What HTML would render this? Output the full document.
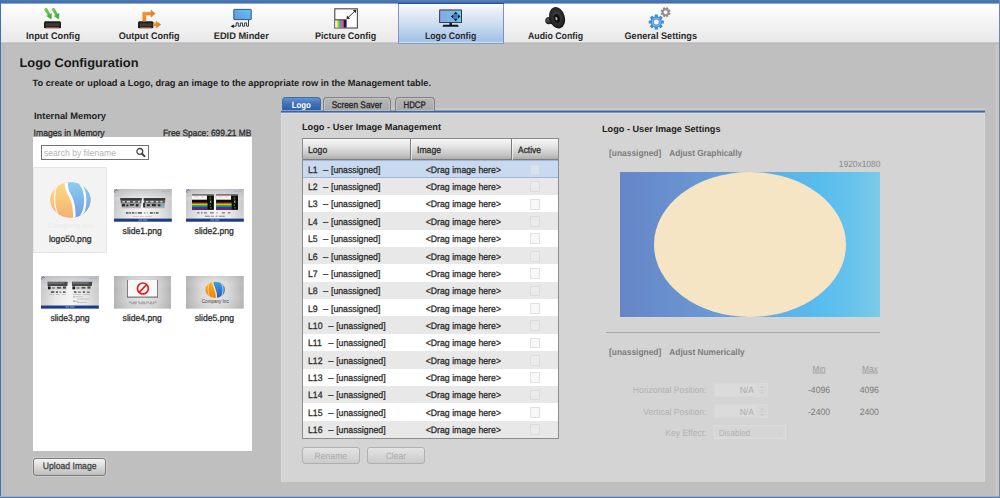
<!DOCTYPE html>
<html><head><meta charset="utf-8"><title>Logo Configuration</title>
<style>
*{box-sizing:border-box;margin:0;padding:0}
html,body{width:1000px;height:498px;overflow:hidden}
body{font-family:"Liberation Sans",sans-serif;font-size:9px;color:#333;background:#bfbfbf;position:relative}
.a{position:absolute}
.t{position:absolute;white-space:nowrap;line-height:20px;height:20px}
#nav{position:absolute;left:0;top:0;width:1000px;height:43px;background:linear-gradient(#fff 0,#fff 14%,#f5f5f5 45%,#e9e9e9 100%);border-bottom:1px solid #cbcbcb;box-shadow:0 1px 0 #b9b9b9}
#active{position:absolute;left:398px;top:3.2px;width:106px;height:40.8px;background:linear-gradient(#fcfdfe 0,#eaf1f9 15%,#c9dbf0 55%,#a0c1e9 96%,#c6def6 97%,#c6def6 100%);border-left:1.1px solid #8a8ecb;border-right:1.1px solid #7f8cca;border-top:1.2px solid #2c4f98;border-bottom:1px solid #8f9cae}
#acttop{position:absolute;left:398px;top:0;width:106px;height:4.4px;background:linear-gradient(#5d83c2 0,#4a76b4 45%,#3f6aaa 68%,#2c4f98 70%,#2c4f98 100%);z-index:10}
#ftop{position:absolute;left:0;top:0;width:1000px;height:4px;background:linear-gradient(#4c7ab4 0,#4872b0 50%,#3f69a9 75%,#3f69a9 75%,#7f9bc8 76%,#a9bcdc 100%);z-index:9}
#fleft{position:absolute;left:0;top:0;width:1.1px;height:498px;background:#3f6fb8;z-index:9}
#fbot{position:absolute;left:0;top:496px;width:1000px;height:2px;background:linear-gradient(#a0aec4 0,#a0aec4 50%,#4f7cba 50%,#4f7cba 100%);z-index:9}
#fright{position:absolute;left:999px;top:0;width:1px;height:498px;background:#6c86bc;z-index:9}
#rstrip{position:absolute;left:992px;top:44px;width:7px;height:453px;background:linear-gradient(90deg,#c5b9c4 0,#c5b9c4 28%,#bfc5bb 29%,#bfc5bb 57%,#c6c7bf 58%,#c6c7bf 100%);z-index:8}
#lstrip{position:absolute;left:1px;top:44px;width:7px;height:453px;background:linear-gradient(90deg,#c2c1b5 0,#c2c1b5 21%,#b8bcc5 22%,#b8bcc5 50%,#c5bac1 51%,#c5bac1 78%,#bac4bb 79%,#bac4bb 100%);z-index:8}
</style></head><body>
<div id="nav"></div>
<div id="active"></div>
<!-- Input Config icon -->
<svg class="a" style="left:40px;top:5px" width="26" height="26" viewBox="40 5 26 26">
 <defs><linearGradient id="gr" x1="0" y1="0" x2="1" y2="1"><stop offset="0" stop-color="#7edc5a"/><stop offset="1" stop-color="#2f9e2a"/></linearGradient></defs>
 <g fill="url(#gr)" stroke="#3aa535" stroke-width=".4">
  <path d="M44.3 9.2 L46.6 8 L50 14.2 L51.6 13.4 L51.2 19 L46.6 16 L48.1 15.2 Z"/>
  <path d="M51.8 9.2 L54.1 8 L57.5 14.2 L59.1 13.4 L58.7 19 L54.1 16 L55.6 15.2 Z"/>
 </g>
 <path d="M45 21.2 H60 L61 22.2 V27.2 L60 28.2 H45 L44 27.2 V22.2 Z" fill="#1c1c1c"/>
 <rect x="45.5" y="23.2" width="14" height="3" fill="#3a3a3a"/>
 <rect x="46" y="27.1" width="13" height="1" fill="#b4523a"/>
</svg>
<!-- Output Config icon -->
<svg class="a" style="left:134px;top:5px" width="30" height="26" viewBox="134 5 30 26">
 <path d="M139 21.3 H152.3 L153.3 22.3 V27.2 L152.3 28.2 H139 L138 27.2 V22.3 Z" fill="#1c1c1c"/>
 <rect x="139.6" y="23.2" width="12.2" height="3" fill="#3a3a3a"/>
 <rect x="140" y="27.1" width="11.4" height="1" fill="#b4523a"/>
 <defs><linearGradient id="orr" x1="0" y1="0" x2="1" y2="1"><stop offset="0" stop-color="#f9a23c"/><stop offset="1" stop-color="#e46f0c"/></linearGradient></defs><g fill="url(#orr)" stroke="#c9680e" stroke-width=".4">
  <path d="M142.8 21.4 V12.2 H150.9 V10 L155.2 13.6 L150.9 17.2 V15 H145.8 V21.4 Z"/>
  <path d="M153 23.4 H156.3 V21.3 L160.8 24.6 L156.3 27.9 V25.8 H153 Z"/>
 </g>
</svg>
<!-- EDID Minder icon -->
<svg class="a" style="left:226px;top:5px" width="30" height="26" viewBox="226 5 30 26">
 <defs><linearGradient id="ed" x1="1" y1="0" x2="0" y2="1"><stop offset="0" stop-color="#64c6f3"/><stop offset=".5" stop-color="#60aeeb"/><stop offset="1" stop-color="#6a8fe0"/></linearGradient></defs>
 <rect x="233.8" y="9.4" width="17.4" height="10.2" rx=".4" fill="url(#ed)" stroke="#2f5688" stroke-width="1"/>
 <path d="M233.6 26.2 H236.2 V22.9 H238.3 V26.2 H240.4 V22.9 H242.5 V26.2 H244.6 V22.9 H246.6 V26.2 H248.5 V20" fill="none" stroke="#2a2a2a" stroke-width=".9"/>
 <path d="M230.6 26.3 L233.8 24.5 V28.1 Z" fill="#111"/>
</svg>
<!-- Picture Config icon -->
<svg class="a" style="left:330px;top:5px" width="32" height="26" viewBox="330 5 32 26">
 <rect x="334.8" y="8.8" width="22.6" height="19.2" fill="#fcfcfc" stroke="#4a4a4a" stroke-width="1.1"/>
 <rect x="335.4" y="20" width="1.3" height="7.6" fill="#f4f4f4"/>
 <rect x="336.6" y="20" width="1.9" height="7.6" fill="#f0e020"/>
 <rect x="338.4" y="20" width="1.5" height="7.6" fill="#30c848"/>
 <rect x="339.8" y="20" width="1.5" height="7.6" fill="#28a8e0"/>
 <rect x="341.2" y="20" width="1.4" height="7.6" fill="#e030a0"/>
 <rect x="342.5" y="20" width="1.6" height="7.6" fill="#e82848"/>
 <rect x="344" y="20" width="2.6" height="7.6" fill="#181848"/>
 <path d="M335 19.8 H346.6" fill="none" stroke="#333" stroke-width="1"/>
 <path d="M347.6 18 L355.2 10.8" stroke="#333" stroke-width="1"/>
 <path d="M356.2 9.8 L355.9 13.3 L352.7 10.1 Z M346.6 19 L346.9 15.5 L350.1 18.7 Z" fill="#2a2a2a"/>
</svg>
<!-- Logo Config icon -->
<svg class="a" style="left:434px;top:5px" width="32" height="26" viewBox="434 5 32 26">
 <defs><linearGradient id="lc" x1="0" y1="0" x2="1" y2="0"><stop offset="0" stop-color="#86a8e6"/><stop offset=".5" stop-color="#7cb4ea"/><stop offset="1" stop-color="#6cc8f2"/></linearGradient></defs>
 <rect x="439.2" y="9.5" width="22.7" height="13.6" rx=".6" fill="#2a2226"/>
 <rect x="440.1" y="10.4" width="20.9" height="11.8" fill="url(#lc)"/>
 <circle cx="455.7" cy="16.5" r="2.3" fill="#2f7fd8"/>
 <path d="M455.7 11.8 L457.9 14.2 H453.5 Z M455.7 21.2 L457.9 18.8 H453.5 Z M451 16.5 L453.4 14.3 V18.7 Z M460.4 16.5 L458 14.3 V18.7 Z" fill="#141820"/>
 <rect x="449.4" y="23" width="2.6" height="2" fill="#1c1c1e"/>
 <path d="M443.4 24.7 H457.8 L458.8 26.7 H442.4 Z" fill="#141416"/>
</svg>
<!-- Audio Config icon -->
<svg class="a" style="left:540px;top:4px" width="30" height="26" viewBox="540 4 30 26">
 <defs><radialGradient id="sp" cx=".5" cy=".45" r=".6"><stop offset="0" stop-color="#4a4a4a"/><stop offset=".6" stop-color="#2a2a2a"/><stop offset="1" stop-color="#0e0e0e"/></radialGradient>
 <radialGradient id="sk" cx=".4" cy=".4" r=".7"><stop offset="0" stop-color="#5a5a5a"/><stop offset="1" stop-color="#0c0c0c"/></radialGradient></defs>
 <circle cx="548.8" cy="20.6" r="3.6" fill="url(#sk)"/><path d="M549 17.2 L554 15 L555 25 L550.4 23.8 Z" fill="#1a1a1a"/>
 <g transform="translate(557.1 17.8) rotate(-16)">
  <ellipse rx="7.7" ry="11" fill="url(#sp)"/>
  <ellipse cx="-0.4" cy="0.6" rx="3" ry="4.4" fill="#101010"/>
  <ellipse cx="-0.9" cy="0.6" rx="1" ry="1.7" fill="#b4b4b4"/>
 </g>
</svg>
<!-- General Settings icon -->
<svg class="a" style="left:646px;top:4px" width="30" height="28" viewBox="646 4 30 28">
 <g transform="translate(656.3 22)">
  <g fill="#3f8ad8">
   <rect x="-1.6" y="-7.6" width="3.2" height="15.2" rx=".6"/>
   <rect x="-1.6" y="-7.6" width="3.2" height="15.2" rx=".6" transform="rotate(45)"/>
   <rect x="-1.6" y="-7.6" width="3.2" height="15.2" rx=".6" transform="rotate(90)"/>
   <rect x="-1.6" y="-7.6" width="3.2" height="15.2" rx=".6" transform="rotate(135)"/>
  </g>
  <circle r="5.7" fill="#3f8ad8"/>
  <circle r="4.5" fill="#84bef0"/>
  <circle r="3.4" fill="#4a94de"/>
  <circle r="2.5" fill="#f6f6f2"/>
 </g>
 <g transform="translate(665.6 12.2) rotate(22)">
  <g fill="#8a8a8a">
   <rect x="-1.1" y="-5" width="2.2" height="10" rx=".4"/>
   <rect x="-1.1" y="-5" width="2.2" height="10" rx=".4" transform="rotate(45)"/>
   <rect x="-1.1" y="-5" width="2.2" height="10" rx=".4" transform="rotate(90)"/>
   <rect x="-1.1" y="-5" width="2.2" height="10" rx=".4" transform="rotate(135)"/>
  </g>
  <circle r="3.7" fill="#909090"/>
  <circle r="1.9" fill="#fafafa"/>
 </g>
</svg>

<div class="a" style="left:33px;top:137px;width:219px;height:314px;background:#fff;"></div>
<div class="a" style="left:40.5px;top:145px;width:108.5px;height:14.5px;background:#fff;border:1px solid #727272;"></div>
<svg class="a" style="left:134px;top:146px" width="13" height="13" viewBox="0 0 13 13"><circle cx="5.8" cy="5.4" r="2.9" fill="none" stroke="#444" stroke-width="1.3"/><path d="M8 7.7 L10.6 10.2" stroke="#444" stroke-width="1.9" stroke-linecap="round"/></svg>
<div class="a" style="left:33px;top:167px;width:73.5px;height:86px;background:#f3f3f3;border:1px solid #e6e6e6;"></div>
<!-- logo50 globe -->
<svg class="a" style="left:40px;top:176px" width="62" height="58" viewBox="40 176 62 58">
 <defs>
  <clipPath id="g1"><ellipse cx="70.4" cy="200" rx="20.2" ry="17.8"/></clipPath>
  <linearGradient id="og" x1="0" y1="0" x2="0" y2="1"><stop offset="0" stop-color="#f9dc84"/><stop offset=".55" stop-color="#f7c67a"/><stop offset="1" stop-color="#f4ac72"/></linearGradient>
  <linearGradient id="bl" x1="0" y1="0" x2="0" y2="1"><stop offset="0" stop-color="#8ad0f5"/><stop offset=".5" stop-color="#7cb6ec"/><stop offset="1" stop-color="#7098e0"/></linearGradient>
 </defs>
 <g clip-path="url(#g1)">
  <rect x="48" y="180" width="45" height="40" fill="url(#og)"/>
  <path d="M66.5 180 C65.5 192 75.5 198 74.4 220 L95 220 L95 180 Z" fill="url(#bl)"/>
  <path d="M65.2 181 C63.8 186 65.6 190.5 68.6 196 C71.8 202 73.4 208 73 219 L75.4 219 C76.2 208 74 200 71 194.6 C68.4 190 67.4 186 68.4 181 Z" fill="#fbfbfb"/>
  <path d="M56.8 184.5 C53.6 193 53.8 206 57.8 214.5" stroke="#f9f5ec" stroke-width="1.3" fill="none"/>
  <path d="M80 183.4 C86.8 191 87 208 80.6 216.8" stroke="#fafafa" stroke-width="2.3" fill="none"/>
 </g>
 <text x="70.4" y="227.6" font-size="7.2" font-weight="bold" text-anchor="middle" fill="#ededed" font-family="Liberation Sans, sans-serif">Company Inc</text>
</svg>
<!-- slide1 -->
<svg class="a" style="left:114px;top:189.4px" width="57.8" height="32.7" viewBox="0 0 58 33" preserveAspectRatio="none">
 <defs>
  <linearGradient id="sbg" x1="0" y1="0" x2="1" y2="0"><stop offset="0" stop-color="#c6c6c8"/><stop offset=".25" stop-color="#e6e6e7"/><stop offset=".5" stop-color="#f4f4f5"/><stop offset=".75" stop-color="#e6e6e7"/><stop offset="1" stop-color="#c6c6c8"/></linearGradient>
  <linearGradient id="sbv" x1="0" y1="0" x2="0" y2="1"><stop offset="0" stop-color="#b4b4b8" stop-opacity=".75"/><stop offset=".22" stop-color="#c8c8cc" stop-opacity=".45"/><stop offset=".38" stop-color="#fff" stop-opacity="0"/><stop offset="1" stop-color="#fff" stop-opacity=".2"/></linearGradient>
  <linearGradient id="dev" x1="0" y1="0" x2="0" y2="1"><stop offset="0" stop-color="#4a4c4e"/><stop offset=".45" stop-color="#5e6062"/><stop offset=".55" stop-color="#9a9c9e"/><stop offset="1" stop-color="#b4b6b8"/></linearGradient>
  <filter id="soft" x="-5%" y="-5%" width="110%" height="110%"><feGaussianBlur stdDeviation=".35"/></filter>
 </defs>
 <g id="slidebg">
  <rect width="58" height="33" fill="url(#sbg)"/>
  <rect width="58" height="33" fill="url(#sbv)"/>
  <path d="M1.3 3.8 A1.5 1.5 0 1 1 3.6 2.2" stroke="#4a5f88" stroke-width=".8" fill="none"/>
  <rect x="48.6" y="1.8" width="2.4" height="1" fill="#9ab0d4"/><rect x="52" y="1.8" width="1.6" height="1" fill="#9ab0d4"/><rect x="54.4" y="1.8" width="1.8" height="1" fill="#9ab0d4"/>
  <rect x="0" y="29.9" width="58" height="3.1" fill="#1d3b8b"/>
  <rect x="24.6" y="30.9" width="3.6" height=".9" fill="#9cb0e0"/><rect x="29" y="30.9" width="4.6" height=".9" fill="#9cb0e0"/>
 </g>
 <g filter="url(#soft)">
  <path d="M6.2 9 H28 L27 19.4 H7.6 Z" fill="url(#dev)"/>
  <path d="M29.6 9 H51.6 L50.6 19.4 H30.4 Z" fill="url(#dev)"/>
  <rect x="6.6" y="9.4" width="21" height="1.6" fill="#333537"/><rect x="30" y="9.4" width="21.2" height="1.6" fill="#333537"/>
  <g fill="#d8dadc"><rect x="8.5" y="12.2" width="2.4" height="1.4"/><rect x="13" y="12" width="3" height="1.6"/><rect x="19" y="12.2" width="2.4" height="1.4"/><rect x="24" y="12" width="2" height="1.6"/><rect x="32" y="12.2" width="2.4" height="1.4"/><rect x="36.6" y="12" width="3" height="1.6"/><rect x="42" y="12.2" width="2.4" height="1.4"/><rect x="46.5" y="12" width="2" height="1.6"/></g>
  <g fill="#2a2c2e"><rect x="8" y="15" width="3" height="2.6"/><rect x="12.4" y="15.6" width="2" height="2"/><rect x="16" y="15.2" width="4" height="1.6"/><rect x="22" y="15.2" width="2.6" height="2.4"/><rect x="29.2" y="14" width="1.8" height="4.6"/><rect x="33" y="15.4" width="3" height="2"/><rect x="38" y="15" width="4" height="2.4"/><rect x="44" y="15.4" width="2.6" height="2"/></g>
  <rect x="47.6" y="15" width="3" height="3.4" fill="#7ea8c8"/>
 </g>
 <g fill="#5e5e60"><rect x="12" y="23.3" width="2.6" height="1.7"/><rect x="15.4" y="23.3" width="1.6" height="1.7"/><rect x="18" y="23.3" width="2.4" height="1.7"/><rect x="21.6" y="23.3" width="1" height="1.7"/><rect x="24" y="23.3" width="4" height="1.7"/><rect x="30" y="23.8" width="1.6" height=".8"/><rect x="33" y="23.8" width="1" height=".8"/><rect x="36" y="23.3" width="3" height="1.7"/><rect x="40" y="23.3" width="1" height="1.7"/><rect x="42" y="23.3" width="2.6" height="1.7"/></g>
 <g fill="#c0b8a8"><rect x="19" y="27.2" width="6" height=".7"/><rect x="26" y="27.2" width="4" height=".7"/><rect x="31" y="27.2" width="7" height=".7"/></g>
</svg>
<!-- slide2 -->
<svg class="a" style="left:186px;top:189.4px" width="57.8" height="32.7" viewBox="0 0 58 33" preserveAspectRatio="none">
 <use href="#slidebg"/>
 <g id="cbpanel" filter="url(#soft)" transform="translate(0 .7)">
  <rect x="6" y="4.8" width="22" height="15.6" fill="#0c0c0c"/>
  <rect x="6" y="4.8" width="22" height="1.1" fill="#8a8a8c"/>
  <rect x="6" y="5.9" width="15" height="4.2" fill="#faf8f8"/>
  <rect x="8" y="7" width="5" height=".6" fill="#e8a0a0"/><rect x="14.5" y="7" width="4" height=".6" fill="#e8a0a0"/>
  <rect x="6" y="13.1" width="15.6" height="1.2" fill="#e85820"/>
  <rect x="6" y="14.3" width="15.6" height="1.2" fill="#c8d028"/>
  <rect x="6" y="15.5" width="15.6" height="1.1" fill="#30b048"/>
  <rect x="6" y="16.6" width="15.6" height="1.1" fill="#2898a8"/>
  <rect x="6" y="17.7" width="15.6" height="1.2" fill="#2848c8"/>
  <rect x="6" y="18.9" width="15.6" height="1.2" fill="#a02890"/>
  <rect x="23.6" y="7" width="1.6" height="3" fill="#3a5a3a"/><rect x="24" y="11" width="1.4" height="2.4" fill="#68b868"/><rect x="23.8" y="14.6" width="1.2" height="2" fill="#3a6a3a"/><rect x="24.4" y="17.4" width="1" height="1.6" fill="#4a8a4a"/>
 </g>
 <use href="#cbpanel" x="24.2"/>
 <g fill="#8a8a8c"><rect x="11" y="23.3" width="2.6" height="1.5"/><rect x="15" y="23.3" width="1.6" height="1.5"/><rect x="18" y="23.3" width="3" height="1.5"/><rect x="24" y="23.3" width="4" height="1.5"/><rect x="30" y="23.8" width="2" height=".7"/><rect x="36" y="23.3" width="3" height="1.5"/><rect x="42" y="23.3" width="2.6" height="1.5"/></g>
 <g fill="#77777a"><rect x="19" y="27" width="5" height=".9"/><rect x="25" y="27" width="3" height=".9"/><rect x="29.6" y="27" width="2" height=".9"/><rect x="33" y="27" width="6" height=".9"/></g>
</svg>
<!-- slide3 -->
<svg class="a" style="left:41.3px;top:276.2px" width="57.8" height="32.6" viewBox="0 0 58 33" preserveAspectRatio="none">
 <use href="#slidebg"/>
 <g filter="url(#soft)">
  <g id="dev3">
   <path d="M6.6 5.8 H26.8 L26 14 H6.6 Z" fill="#d2d4d6"/>
   <path d="M6.6 5.8 H26.8 L26.4 10 H6.6 Z" fill="#47494b"/>
   <rect x="7.4" y="6.6" width="16" height="1" fill="#8a8c8e"/>
   <rect x="7" y="10.6" width="2.6" height="2.8" fill="#151515"/>
   <rect x="11" y="11.4" width="3" height="1.4" fill="#777"/><rect x="16" y="11" width="4" height="1.8" fill="#555"/><rect x="22" y="10.6" width="3" height="2.2" fill="#444"/>
  </g>
  <use href="#dev3" x="24.6"/>
 </g>
 <g fill="#2a2a2c"><rect x="10" y="15.6" width="3.4" height="1.3"/><rect x="15" y="15.6" width="2" height="1.3"/><rect x="18.4" y="15.9" width="2" height=".8"/><rect x="22" y="15.6" width="2.6" height="1.3"/><rect x="33" y="15.6" width="2.6" height="1.3"/><rect x="37" y="15.9" width="3" height=".8"/><rect x="42" y="15.6" width="2" height="1.3"/><rect x="46" y="15.9" width="3" height=".8"/></g>
 <g fill="#a8a8aa"><rect x="8" y="18.6" width="5" height=".6"/><rect x="15" y="18.6" width="4" height=".6"/><rect x="21" y="18.6" width="4" height=".6"/><rect x="32" y="18.6" width="8" height=".6"/><rect x="42" y="18.6" width="7" height=".6"/><rect x="34" y="20.8" width="8" height=".6"/><rect x="36" y="23" width="12" height=".6"/><rect x="34" y="25.2" width="4" height=".6"/><rect x="36" y="26.6" width="10" height=".6"/></g>
 <g fill="#666"><rect x="32.4" y="20.6" width="1.2" height=".9"/><rect x="32.4" y="25" width="1.6" height=".9"/></g>
</svg>
<!-- slide4 -->
<svg class="a" style="left:114px;top:276.2px" width="57.4" height="32.6" viewBox="0 0 58 33" preserveAspectRatio="none">
 <defs>
  <linearGradient id="s4" x1="0" y1="0" x2="1" y2="0"><stop offset="0" stop-color="#b2b2b2"/><stop offset=".28" stop-color="#dadada"/><stop offset=".5" stop-color="#e6e6e6"/><stop offset=".72" stop-color="#dadada"/><stop offset="1" stop-color="#b2b2b2"/></linearGradient>
  <linearGradient id="s4v" x1="0" y1="0" x2="0" y2="1"><stop offset="0" stop-color="#aaa" stop-opacity=".35"/><stop offset=".4" stop-color="#fff" stop-opacity="0"/><stop offset="1" stop-color="#aaa" stop-opacity=".25"/></linearGradient>
 </defs>
 <g id="s4bg"><rect width="58" height="33" fill="url(#s4)"/><rect width="58" height="33" fill="url(#s4v)"/></g>
 <rect x="13.2" y="4" width="31.2" height="17.8" fill="#4c4c4c"/>
 <rect x="13.9" y="4" width="29.8" height="16.9" fill="#f8f8f8"/>
 <circle cx="29.2" cy="12.6" r="5.5" fill="none" stroke="#e02020" stroke-width="1.7"/>
 <path d="M25.4 16.6 L33 8.6" stroke="#e02020" stroke-width="1.7"/>
 <g fill="#8a8a8a"><rect x="15" y="26" width="3" height=".9"/><rect x="19" y="26" width="4" height=".9"/><rect x="24" y="26" width="2.4" height=".9"/><rect x="27.4" y="26" width="4" height=".9"/><rect x="32.4" y="26" width="3" height=".9"/><rect x="36.4" y="26" width="2" height=".9"/><rect x="39.4" y="26" width="4" height=".9"/><rect x="17" y="27.8" width="6" height=".7"/><rect x="25" y="27.8" width="8" height=".7"/><rect x="35" y="27.8" width="6" height=".7"/></g>
</svg>
<!-- slide5 -->
<svg class="a" style="left:186px;top:276.2px" width="57.7" height="32.6" viewBox="0 0 58 33" preserveAspectRatio="none">
 <defs>
  <clipPath id="g5"><ellipse cx="29.3" cy="14" rx="9.8" ry="8.3"/></clipPath>
  <linearGradient id="o5" x1="0" y1="0" x2="0" y2="1"><stop offset="0" stop-color="#fbb81c"/><stop offset="1" stop-color="#ee7a12"/></linearGradient>
  <linearGradient id="b5" x1="0" y1="0" x2="0" y2="1"><stop offset="0" stop-color="#3ca8ec"/><stop offset="1" stop-color="#2a50b8"/></linearGradient>
 </defs>
 <use href="#s4bg"/>
 <g clip-path="url(#g5)"><g transform="translate(0 .6)">
  <rect x="19" y="3" width="22" height="21" fill="url(#o5)"/>
  <path d="M27.6 4 C27 10 32 13 31.2 23 L42 23 L42 4 Z" fill="url(#b5)"/>
  <path d="M27 4.5 C26.2 10 31.4 13.4 30.6 22.6" stroke="#f4f0e8" stroke-width="1.1" fill="none"/>
  <path d="M23.4 6 C21.6 10 21.8 17 24 21" stroke="#fde0a0" stroke-width=".7" fill="none"/>
  <path d="M34.6 5.4 C38 10 38 17 34.8 21.6" stroke="#cfe4f8" stroke-width=".9" fill="none"/>
 </g></g>
 <text x="29.4" y="26.9" font-size="5" textLength="27" lengthAdjust="spacingAndGlyphs" text-anchor="middle" fill="#3c3c3c" font-family="Liberation Sans, sans-serif">Company Inc</text>
</svg>

<div class="a" style="left:33px;top:458px;width:73px;height:17.5px;border:1px solid #7c7c7c;border-radius:3px;background:linear-gradient(#f4f4f4,#dadada 50%,#bcbcbc);box-shadow:0 0 0 1px rgba(255,255,255,.22)"></div>
<div class="a" style="left:281px;top:108px;width:704px;height:3px;background:#c9c9c9;"></div>
<div class="a" style="left:281px;top:111px;width:704px;height:371px;background:#d4d4d4;border-left:1px solid #dadada;border-right:1px solid #dadada;"></div>
<div class="a" style="left:281px;top:110px;width:704px;height:3px;background:linear-gradient(#8fa1bc 0,#8fa1bc 33.3%,#3766a9 33.3%,#3766a9 66.6%,#7a96be 66.6%,#7a96be 100%);"></div>
<div class="a" style="left:281px;top:113px;width:704px;height:1px;background:#dcdcdc;"></div>
<div class="a" style="left:282px;top:97px;width:38.5px;height:13.4px;background:linear-gradient(#6693cf,#4273b8 45%,#2e5fa5);border-radius:4px 4px 0 0;border:1px solid #3e6cac;border-bottom:none"></div>
<div class="a" style="left:323.2px;top:97px;width:68.3px;height:13.6px;background:linear-gradient(#b6b6b6,#a9a9a9);border-radius:4px 4px 0 0;border:1px solid #828282;border-bottom:none;box-shadow:inset 0 0 0 1px rgba(255,255,255,.2)"></div>
<div class="a" style="left:394.5px;top:97px;width:40.5px;height:13.6px;background:linear-gradient(#b6b6b6,#a9a9a9);border-radius:4px 4px 0 0;border:1px solid #828282;border-bottom:none;box-shadow:inset 0 0 0 1px rgba(255,255,255,.2)"></div>
<div class="a" style="left:302px;top:137.7px;width:257px;height:300.6px;background:#fff;border:1px solid #8a8a8a;"></div>
<div class="a" style="left:303px;top:138.7px;width:255px;height:21px;background:linear-gradient(#f8f8f8,#e2e2e2 40%,#c4c4c4 80%,#adadad);border-bottom:1px solid #7d7d7d"></div>
<div class="a" style="left:410px;top:138.7px;width:1px;height:21px;background:#7a7a7a;box-shadow:1px 0 0 rgba(255,255,255,.6)"></div>
<div class="a" style="left:511.2px;top:138.7px;width:1px;height:21px;background:#7a7a7a;box-shadow:1px 0 0 rgba(255,255,255,.6)"></div>
<div class="a" style="left:303px;top:160.2px;width:255px;height:17.36px;background:#c9d9ef;border-top:1px solid #9db6d8;border-bottom:1px solid #9db6d8"></div>
<div class="a" style="left:530.2px;top:164.0px;width:9.8px;height:10.8px;background:rgba(238,238,238,.42);border:1px solid rgba(210,210,210,.6);border-radius:1px"></div>
<div class="a" style="left:303px;top:177.56px;width:255px;height:17.36px;background:#e8e8e8;"></div>
<div class="a" style="left:530.2px;top:181.36px;width:9.8px;height:10.8px;background:rgba(238,238,238,.42);border:1px solid rgba(210,210,210,.6);border-radius:1px"></div>
<div class="a" style="left:530.2px;top:198.72px;width:9.8px;height:10.8px;background:rgba(238,238,238,.42);border:1px solid rgba(210,210,210,.6);border-radius:1px"></div>
<div class="a" style="left:303px;top:212.28px;width:255px;height:17.36px;background:#e8e8e8;"></div>
<div class="a" style="left:530.2px;top:216.08px;width:9.8px;height:10.8px;background:rgba(238,238,238,.42);border:1px solid rgba(210,210,210,.6);border-radius:1px"></div>
<div class="a" style="left:530.2px;top:233.44px;width:9.8px;height:10.8px;background:rgba(238,238,238,.42);border:1px solid rgba(210,210,210,.6);border-radius:1px"></div>
<div class="a" style="left:303px;top:247.0px;width:255px;height:17.36px;background:#e8e8e8;"></div>
<div class="a" style="left:530.2px;top:250.8px;width:9.8px;height:10.8px;background:rgba(238,238,238,.42);border:1px solid rgba(210,210,210,.6);border-radius:1px"></div>
<div class="a" style="left:530.2px;top:268.16px;width:9.8px;height:10.8px;background:rgba(238,238,238,.42);border:1px solid rgba(210,210,210,.6);border-radius:1px"></div>
<div class="a" style="left:303px;top:281.72px;width:255px;height:17.36px;background:#e8e8e8;"></div>
<div class="a" style="left:530.2px;top:285.52px;width:9.8px;height:10.8px;background:rgba(238,238,238,.42);border:1px solid rgba(210,210,210,.6);border-radius:1px"></div>
<div class="a" style="left:530.2px;top:302.88px;width:9.8px;height:10.8px;background:rgba(238,238,238,.42);border:1px solid rgba(210,210,210,.6);border-radius:1px"></div>
<div class="a" style="left:303px;top:316.44px;width:255px;height:17.36px;background:#e8e8e8;"></div>
<div class="a" style="left:530.2px;top:320.24px;width:9.8px;height:10.8px;background:rgba(238,238,238,.42);border:1px solid rgba(210,210,210,.6);border-radius:1px"></div>
<div class="a" style="left:530.2px;top:337.6px;width:9.8px;height:10.8px;background:rgba(238,238,238,.42);border:1px solid rgba(210,210,210,.6);border-radius:1px"></div>
<div class="a" style="left:303px;top:351.16px;width:255px;height:17.36px;background:#e8e8e8;"></div>
<div class="a" style="left:530.2px;top:354.96px;width:9.8px;height:10.8px;background:rgba(238,238,238,.42);border:1px solid rgba(210,210,210,.6);border-radius:1px"></div>
<div class="a" style="left:530.2px;top:372.32px;width:9.8px;height:10.8px;background:rgba(238,238,238,.42);border:1px solid rgba(210,210,210,.6);border-radius:1px"></div>
<div class="a" style="left:303px;top:385.88px;width:255px;height:17.36px;background:#e8e8e8;"></div>
<div class="a" style="left:530.2px;top:389.68px;width:9.8px;height:10.8px;background:rgba(238,238,238,.42);border:1px solid rgba(210,210,210,.6);border-radius:1px"></div>
<div class="a" style="left:530.2px;top:407.04px;width:9.8px;height:10.8px;background:rgba(238,238,238,.42);border:1px solid rgba(210,210,210,.6);border-radius:1px"></div>
<div class="a" style="left:303px;top:420.6px;width:255px;height:17.36px;background:#e8e8e8;"></div>
<div class="a" style="left:530.2px;top:424.4px;width:9.8px;height:10.8px;background:rgba(238,238,238,.42);border:1px solid rgba(210,210,210,.6);border-radius:1px"></div>
<div class="a" style="left:302px;top:137.7px;width:257px;height:301px;border:1px solid #8c8c8c;border-top-color:#8a8a8a;"></div>
<div class="a" style="left:302px;top:447.2px;width:57.7px;height:16.5px;border:1px solid #b0b0b0;border-radius:3px;background:linear-gradient(#e4e4e4,#d6d6d6 55%,#cbcbcb);"></div>
<div class="a" style="left:367px;top:447.2px;width:57.8px;height:16.5px;border:1px solid #b0b0b0;border-radius:3px;background:linear-gradient(#e4e4e4,#d6d6d6 55%,#cbcbcb);"></div>
<div class="a" style="left:620px;top:171.6px;width:260px;height:145.6px;background:linear-gradient(90deg,#6585c7 0%,#678bca 10%,#6893cf 25%,#68a1da 45%,#5cb4e8 65%,#58bdef 78%,#6cc4ea 92%,#7ccae8 100%);overflow:hidden"><div style="position:absolute;left:34.4px;top:0;width:191.2px;height:145px;border-radius:50%;background:#f5e5c5"></div></div>
<div class="a" style="left:605.5px;top:331.6px;width:274.5px;height:1px;background:#a6a6a6;"></div>
<div class="a" style="left:714px;top:382.6px;width:42.3px;height:14.2px;background:#dbdbdb;border:1px solid #d8d8d8;"></div>
<div class="a" style="left:756.3px;top:382.6px;width:11.7px;height:14.2px;background:#d8d8d8;border:1px solid #dadada;"></div>
<div class="a" style="left:757.4px;top:389.6px;width:9.6px;height:1px;background:#d2d2d2;"></div>
<svg class="a" style="left:759px;top:385.1px" width="6" height="10" viewBox="0 0 6 10"><path d="M0.5 3 L3 0.8 L5.5 3 Z M0.5 7 L3 9.2 L5.5 7 Z" fill="#cdcdcd"/></svg>
<div class="a" style="left:714px;top:404.2px;width:42.3px;height:14.2px;background:#dbdbdb;border:1px solid #d8d8d8;"></div>
<div class="a" style="left:756.3px;top:404.2px;width:11.7px;height:14.2px;background:#d8d8d8;border:1px solid #dadada;"></div>
<div class="a" style="left:757.4px;top:411.2px;width:9.6px;height:1px;background:#d2d2d2;"></div>
<svg class="a" style="left:759px;top:406.7px" width="6" height="10" viewBox="0 0 6 10"><path d="M0.5 3 L3 0.8 L5.5 3 Z M0.5 7 L3 9.2 L5.5 7 Z" fill="#cdcdcd"/></svg>
<div class="a" style="left:714px;top:425.3px;width:71.6px;height:14.2px;background:#d6d6d6;border:1px solid #dcdcdc;"></div>
<svg class="a" style="left:776.5px;top:430.5px" width="7" height="5" viewBox="0 0 7 5"><path d="M1.8 1.6 L3.5 3 L5.2 1.6" fill="none" stroke="#c9c9c9" stroke-width=".9"/></svg>
<svg class="a" style="left:0;top:0;z-index:5" width="1000" height="498" viewBox="0 0 1000 498" font-family="Liberation Sans, sans-serif" text-rendering="geometricPrecision" xml:space="preserve">
<text y="38.50" font-size="9.6" fill="#2a2a2a" font-weight="bold" x="26.00" textLength="54" lengthAdjust="spacingAndGlyphs">Input Config</text>
<text y="38.50" font-size="9.6" fill="#2a2a2a" font-weight="bold" x="118.75" textLength="60.8" lengthAdjust="spacingAndGlyphs">Output Config</text>
<text y="38.50" font-size="9.6" fill="#2a2a2a" font-weight="bold" x="213.75" textLength="55.0" lengthAdjust="spacingAndGlyphs">EDID Minder</text>
<text y="38.50" font-size="9.6" fill="#2a2a2a" font-weight="bold" x="315.00" textLength="61.2" lengthAdjust="spacingAndGlyphs">Picture Config</text>
<text y="38.50" font-size="9.6" fill="#2a2a2a" font-weight="bold" x="425.00" textLength="51.2" lengthAdjust="spacingAndGlyphs">Logo Config</text>
<text y="38.50" font-size="9.6" fill="#2a2a2a" font-weight="bold" x="528.00" textLength="55" lengthAdjust="spacingAndGlyphs">Audio Config</text>
<text y="38.50" font-size="9.6" fill="#2a2a2a" font-weight="bold" x="624.50" textLength="72.5" lengthAdjust="spacingAndGlyphs">General Settings</text>
<text y="66.80" font-size="12.6" fill="#1a1a1a" font-weight="bold" x="19.50" textLength="119" lengthAdjust="spacingAndGlyphs">Logo Configuration</text>
<text y="86.40" font-size="9.2" fill="#222" font-weight="bold" x="32.50" textLength="398.5" lengthAdjust="spacingAndGlyphs">To create or upload a Logo, drag an image to the appropriate row in the Management table.</text>
<text y="118.90" font-size="9.3" fill="#222" font-weight="bold" x="34.00" textLength="72" lengthAdjust="spacingAndGlyphs">Internal Memory</text>
<text y="135.80" font-size="9.31" fill="#2e2e2e" x="33.60" textLength="71" lengthAdjust="spacingAndGlyphs" stroke="#2e2e2e" stroke-width=".3">Images in Memory</text>
<text y="135.80" font-size="9.2" fill="#2e2e2e" x="163.00" textLength="88.4" lengthAdjust="spacingAndGlyphs" stroke="#2e2e2e" stroke-width=".3">Free Space: 699.21 MB</text>
<text y="155.60" font-size="9.31" fill="#b4b4b4" x="44.00" textLength="72" lengthAdjust="spacingAndGlyphs">search by filename</text>
<text y="242.00" font-size="9.2" fill="#2e2e2e" x="70.20" text-anchor="middle" textLength="42.56" lengthAdjust="spacingAndGlyphs" stroke="#2e2e2e" stroke-width=".3">logo50.png</text>
<text y="233.75" font-size="9.2" fill="#2e2e2e" x="142.20" text-anchor="middle" textLength="39.21" lengthAdjust="spacingAndGlyphs" stroke="#2e2e2e" stroke-width=".3">slide1.png</text>
<text y="233.75" font-size="9.2" fill="#2e2e2e" x="214.20" text-anchor="middle" textLength="39.21" lengthAdjust="spacingAndGlyphs" stroke="#2e2e2e" stroke-width=".3">slide2.png</text>
<text y="320.50" font-size="9.2" fill="#2e2e2e" x="70.00" text-anchor="middle" textLength="39.21" lengthAdjust="spacingAndGlyphs" stroke="#2e2e2e" stroke-width=".3">slide3.png</text>
<text y="320.50" font-size="9.2" fill="#2e2e2e" x="142.20" text-anchor="middle" textLength="39.21" lengthAdjust="spacingAndGlyphs" stroke="#2e2e2e" stroke-width=".3">slide4.png</text>
<text y="320.50" font-size="9.2" fill="#2e2e2e" x="214.40" text-anchor="middle" textLength="39.21" lengthAdjust="spacingAndGlyphs" stroke="#2e2e2e" stroke-width=".3">slide5.png</text>
<text y="469.40" font-size="9.31" fill="#444" x="42.80" textLength="53.7" lengthAdjust="spacingAndGlyphs" stroke="#444" stroke-width=".3">Upload Image</text>
<text y="108.10" font-size="9" fill="#fff" font-weight="bold" x="291.70" textLength="19.2" lengthAdjust="spacingAndGlyphs">Logo</text>
<text y="108.10" font-size="9.5" fill="#222" x="331.80" textLength="50.2" lengthAdjust="spacingAndGlyphs" stroke="#222" stroke-width=".3">Screen Saver</text>
<text y="108.10" font-size="9.5" fill="#222" x="403.50" textLength="22.2" lengthAdjust="spacingAndGlyphs" stroke="#222" stroke-width=".3">HDCP</text>
<text y="130.20" font-size="9.2" fill="#222" font-weight="bold" x="302.00" textLength="139" lengthAdjust="spacingAndGlyphs">Logo - User Image Management</text>
<text y="152.60" font-size="9.31" fill="#2e2e2e" x="308.00" textLength="19.2" lengthAdjust="spacingAndGlyphs" stroke="#2e2e2e" stroke-width=".3">Logo</text>
<text y="152.60" font-size="9.31" fill="#2e2e2e" x="417.00" textLength="24" lengthAdjust="spacingAndGlyphs" stroke="#2e2e2e" stroke-width=".3">Image</text>
<text y="152.60" font-size="9.31" fill="#2e2e2e" x="518.00" textLength="23" lengthAdjust="spacingAndGlyphs" stroke="#2e2e2e" stroke-width=".3">Active</text>
<text y="172.70" font-size="9.31" fill="#2e2e2e" x="308.00" textLength="9.68" lengthAdjust="spacingAndGlyphs" stroke="#2e2e2e" stroke-width=".3">L1</text>
<text y="172.70" font-size="9.31" fill="#2e2e2e" x="323.00" stroke="#2e2e2e" stroke-width=".3">–</text>
<text y="172.70" font-size="9.31" fill="#2e2e2e" x="331.00" textLength="49.4" lengthAdjust="spacingAndGlyphs" stroke="#2e2e2e" stroke-width=".3">[unassigned]</text>
<text y="172.70" font-size="9.31" fill="#2e2e2e" x="425.70" textLength="75.3" lengthAdjust="spacingAndGlyphs" stroke="#2e2e2e" stroke-width=".3">&lt;Drag image here&gt;</text>
<text y="190.06" font-size="9.31" fill="#2e2e2e" x="308.00" textLength="9.68" lengthAdjust="spacingAndGlyphs" stroke="#2e2e2e" stroke-width=".3">L2</text>
<text y="190.06" font-size="9.31" fill="#2e2e2e" x="323.00" stroke="#2e2e2e" stroke-width=".3">–</text>
<text y="190.06" font-size="9.31" fill="#2e2e2e" x="331.00" textLength="49.4" lengthAdjust="spacingAndGlyphs" stroke="#2e2e2e" stroke-width=".3">[unassigned]</text>
<text y="190.06" font-size="9.31" fill="#2e2e2e" x="425.70" textLength="75.3" lengthAdjust="spacingAndGlyphs" stroke="#2e2e2e" stroke-width=".3">&lt;Drag image here&gt;</text>
<text y="207.42" font-size="9.31" fill="#2e2e2e" x="308.00" textLength="9.68" lengthAdjust="spacingAndGlyphs" stroke="#2e2e2e" stroke-width=".3">L3</text>
<text y="207.42" font-size="9.31" fill="#2e2e2e" x="323.00" stroke="#2e2e2e" stroke-width=".3">–</text>
<text y="207.42" font-size="9.31" fill="#2e2e2e" x="331.00" textLength="49.4" lengthAdjust="spacingAndGlyphs" stroke="#2e2e2e" stroke-width=".3">[unassigned]</text>
<text y="207.42" font-size="9.31" fill="#2e2e2e" x="425.70" textLength="75.3" lengthAdjust="spacingAndGlyphs" stroke="#2e2e2e" stroke-width=".3">&lt;Drag image here&gt;</text>
<text y="224.78" font-size="9.31" fill="#2e2e2e" x="308.00" textLength="9.68" lengthAdjust="spacingAndGlyphs" stroke="#2e2e2e" stroke-width=".3">L4</text>
<text y="224.78" font-size="9.31" fill="#2e2e2e" x="323.00" stroke="#2e2e2e" stroke-width=".3">–</text>
<text y="224.78" font-size="9.31" fill="#2e2e2e" x="331.00" textLength="49.4" lengthAdjust="spacingAndGlyphs" stroke="#2e2e2e" stroke-width=".3">[unassigned]</text>
<text y="224.78" font-size="9.31" fill="#2e2e2e" x="425.70" textLength="75.3" lengthAdjust="spacingAndGlyphs" stroke="#2e2e2e" stroke-width=".3">&lt;Drag image here&gt;</text>
<text y="242.14" font-size="9.31" fill="#2e2e2e" x="308.00" textLength="9.68" lengthAdjust="spacingAndGlyphs" stroke="#2e2e2e" stroke-width=".3">L5</text>
<text y="242.14" font-size="9.31" fill="#2e2e2e" x="323.00" stroke="#2e2e2e" stroke-width=".3">–</text>
<text y="242.14" font-size="9.31" fill="#2e2e2e" x="331.00" textLength="49.4" lengthAdjust="spacingAndGlyphs" stroke="#2e2e2e" stroke-width=".3">[unassigned]</text>
<text y="242.14" font-size="9.31" fill="#2e2e2e" x="425.70" textLength="75.3" lengthAdjust="spacingAndGlyphs" stroke="#2e2e2e" stroke-width=".3">&lt;Drag image here&gt;</text>
<text y="259.50" font-size="9.31" fill="#2e2e2e" x="308.00" textLength="9.68" lengthAdjust="spacingAndGlyphs" stroke="#2e2e2e" stroke-width=".3">L6</text>
<text y="259.50" font-size="9.31" fill="#2e2e2e" x="323.00" stroke="#2e2e2e" stroke-width=".3">–</text>
<text y="259.50" font-size="9.31" fill="#2e2e2e" x="331.00" textLength="49.4" lengthAdjust="spacingAndGlyphs" stroke="#2e2e2e" stroke-width=".3">[unassigned]</text>
<text y="259.50" font-size="9.31" fill="#2e2e2e" x="425.70" textLength="75.3" lengthAdjust="spacingAndGlyphs" stroke="#2e2e2e" stroke-width=".3">&lt;Drag image here&gt;</text>
<text y="276.86" font-size="9.31" fill="#2e2e2e" x="308.00" textLength="9.68" lengthAdjust="spacingAndGlyphs" stroke="#2e2e2e" stroke-width=".3">L7</text>
<text y="276.86" font-size="9.31" fill="#2e2e2e" x="323.00" stroke="#2e2e2e" stroke-width=".3">–</text>
<text y="276.86" font-size="9.31" fill="#2e2e2e" x="331.00" textLength="49.4" lengthAdjust="spacingAndGlyphs" stroke="#2e2e2e" stroke-width=".3">[unassigned]</text>
<text y="276.86" font-size="9.31" fill="#2e2e2e" x="425.70" textLength="75.3" lengthAdjust="spacingAndGlyphs" stroke="#2e2e2e" stroke-width=".3">&lt;Drag image here&gt;</text>
<text y="294.22" font-size="9.31" fill="#2e2e2e" x="308.00" textLength="9.68" lengthAdjust="spacingAndGlyphs" stroke="#2e2e2e" stroke-width=".3">L8</text>
<text y="294.22" font-size="9.31" fill="#2e2e2e" x="323.00" stroke="#2e2e2e" stroke-width=".3">–</text>
<text y="294.22" font-size="9.31" fill="#2e2e2e" x="331.00" textLength="49.4" lengthAdjust="spacingAndGlyphs" stroke="#2e2e2e" stroke-width=".3">[unassigned]</text>
<text y="294.22" font-size="9.31" fill="#2e2e2e" x="425.70" textLength="75.3" lengthAdjust="spacingAndGlyphs" stroke="#2e2e2e" stroke-width=".3">&lt;Drag image here&gt;</text>
<text y="311.58" font-size="9.31" fill="#2e2e2e" x="308.00" textLength="9.68" lengthAdjust="spacingAndGlyphs" stroke="#2e2e2e" stroke-width=".3">L9</text>
<text y="311.58" font-size="9.31" fill="#2e2e2e" x="323.00" stroke="#2e2e2e" stroke-width=".3">–</text>
<text y="311.58" font-size="9.31" fill="#2e2e2e" x="331.00" textLength="49.4" lengthAdjust="spacingAndGlyphs" stroke="#2e2e2e" stroke-width=".3">[unassigned]</text>
<text y="311.58" font-size="9.31" fill="#2e2e2e" x="425.70" textLength="75.3" lengthAdjust="spacingAndGlyphs" stroke="#2e2e2e" stroke-width=".3">&lt;Drag image here&gt;</text>
<text y="328.94" font-size="9.31" fill="#2e2e2e" x="308.00" textLength="14.52" lengthAdjust="spacingAndGlyphs" stroke="#2e2e2e" stroke-width=".3">L10</text>
<text y="328.94" font-size="9.31" fill="#2e2e2e" x="328.20" stroke="#2e2e2e" stroke-width=".3">–</text>
<text y="328.94" font-size="9.31" fill="#2e2e2e" x="336.20" textLength="49.4" lengthAdjust="spacingAndGlyphs" stroke="#2e2e2e" stroke-width=".3">[unassigned]</text>
<text y="328.94" font-size="9.31" fill="#2e2e2e" x="425.70" textLength="75.3" lengthAdjust="spacingAndGlyphs" stroke="#2e2e2e" stroke-width=".3">&lt;Drag image here&gt;</text>
<text y="346.30" font-size="9.31" fill="#2e2e2e" x="308.00" textLength="13.87" lengthAdjust="spacingAndGlyphs" stroke="#2e2e2e" stroke-width=".3">L11</text>
<text y="346.30" font-size="9.31" fill="#2e2e2e" x="328.20" stroke="#2e2e2e" stroke-width=".3">–</text>
<text y="346.30" font-size="9.31" fill="#2e2e2e" x="336.20" textLength="49.4" lengthAdjust="spacingAndGlyphs" stroke="#2e2e2e" stroke-width=".3">[unassigned]</text>
<text y="346.30" font-size="9.31" fill="#2e2e2e" x="425.70" textLength="75.3" lengthAdjust="spacingAndGlyphs" stroke="#2e2e2e" stroke-width=".3">&lt;Drag image here&gt;</text>
<text y="363.66" font-size="9.31" fill="#2e2e2e" x="308.00" textLength="14.52" lengthAdjust="spacingAndGlyphs" stroke="#2e2e2e" stroke-width=".3">L12</text>
<text y="363.66" font-size="9.31" fill="#2e2e2e" x="328.20" stroke="#2e2e2e" stroke-width=".3">–</text>
<text y="363.66" font-size="9.31" fill="#2e2e2e" x="336.20" textLength="49.4" lengthAdjust="spacingAndGlyphs" stroke="#2e2e2e" stroke-width=".3">[unassigned]</text>
<text y="363.66" font-size="9.31" fill="#2e2e2e" x="425.70" textLength="75.3" lengthAdjust="spacingAndGlyphs" stroke="#2e2e2e" stroke-width=".3">&lt;Drag image here&gt;</text>
<text y="381.02" font-size="9.31" fill="#2e2e2e" x="308.00" textLength="14.52" lengthAdjust="spacingAndGlyphs" stroke="#2e2e2e" stroke-width=".3">L13</text>
<text y="381.02" font-size="9.31" fill="#2e2e2e" x="328.20" stroke="#2e2e2e" stroke-width=".3">–</text>
<text y="381.02" font-size="9.31" fill="#2e2e2e" x="336.20" textLength="49.4" lengthAdjust="spacingAndGlyphs" stroke="#2e2e2e" stroke-width=".3">[unassigned]</text>
<text y="381.02" font-size="9.31" fill="#2e2e2e" x="425.70" textLength="75.3" lengthAdjust="spacingAndGlyphs" stroke="#2e2e2e" stroke-width=".3">&lt;Drag image here&gt;</text>
<text y="398.38" font-size="9.31" fill="#2e2e2e" x="308.00" textLength="14.52" lengthAdjust="spacingAndGlyphs" stroke="#2e2e2e" stroke-width=".3">L14</text>
<text y="398.38" font-size="9.31" fill="#2e2e2e" x="328.20" stroke="#2e2e2e" stroke-width=".3">–</text>
<text y="398.38" font-size="9.31" fill="#2e2e2e" x="336.20" textLength="49.4" lengthAdjust="spacingAndGlyphs" stroke="#2e2e2e" stroke-width=".3">[unassigned]</text>
<text y="398.38" font-size="9.31" fill="#2e2e2e" x="425.70" textLength="75.3" lengthAdjust="spacingAndGlyphs" stroke="#2e2e2e" stroke-width=".3">&lt;Drag image here&gt;</text>
<text y="415.74" font-size="9.31" fill="#2e2e2e" x="308.00" textLength="14.52" lengthAdjust="spacingAndGlyphs" stroke="#2e2e2e" stroke-width=".3">L15</text>
<text y="415.74" font-size="9.31" fill="#2e2e2e" x="328.20" stroke="#2e2e2e" stroke-width=".3">–</text>
<text y="415.74" font-size="9.31" fill="#2e2e2e" x="336.20" textLength="49.4" lengthAdjust="spacingAndGlyphs" stroke="#2e2e2e" stroke-width=".3">[unassigned]</text>
<text y="415.74" font-size="9.31" fill="#2e2e2e" x="425.70" textLength="75.3" lengthAdjust="spacingAndGlyphs" stroke="#2e2e2e" stroke-width=".3">&lt;Drag image here&gt;</text>
<text y="433.10" font-size="9.31" fill="#2e2e2e" x="308.00" textLength="14.52" lengthAdjust="spacingAndGlyphs" stroke="#2e2e2e" stroke-width=".3">L16</text>
<text y="433.10" font-size="9.31" fill="#2e2e2e" x="328.20" stroke="#2e2e2e" stroke-width=".3">–</text>
<text y="433.10" font-size="9.31" fill="#2e2e2e" x="336.20" textLength="49.4" lengthAdjust="spacingAndGlyphs" stroke="#2e2e2e" stroke-width=".3">[unassigned]</text>
<text y="433.10" font-size="9.31" fill="#2e2e2e" x="425.70" textLength="75.3" lengthAdjust="spacingAndGlyphs" stroke="#2e2e2e" stroke-width=".3">&lt;Drag image here&gt;</text>
<text y="458.60" font-size="9.2" fill="#aaa" x="330.85" text-anchor="middle" textLength="32.51" lengthAdjust="spacingAndGlyphs">Rename</text>
<text y="458.60" font-size="9.2" fill="#aaa" x="395.90" text-anchor="middle" textLength="20.55" lengthAdjust="spacingAndGlyphs">Clear</text>
<text y="132.00" font-size="9.15" fill="#222" font-weight="bold" x="602.00" textLength="118.5" lengthAdjust="spacingAndGlyphs">Logo - User Image Settings</text>
<text y="156.20" font-size="8.9" fill="#7d7d7d" font-weight="bold" x="609.00" textLength="52.3" lengthAdjust="spacingAndGlyphs">[unassigned]</text>
<text y="156.20" font-size="8.9" fill="#7d7d7d" font-weight="bold" x="669.30" textLength="72.7" lengthAdjust="spacingAndGlyphs">Adjust Graphically</text>
<text y="166.60" font-size="9.1" fill="#888" x="838.80" textLength="41.6" lengthAdjust="spacingAndGlyphs">1920x1080</text>
<text y="355.20" font-size="8.9" fill="#7d7d7d" font-weight="bold" x="609.00" textLength="52.3" lengthAdjust="spacingAndGlyphs">[unassigned]</text>
<text y="355.20" font-size="8.9" fill="#7d7d7d" font-weight="bold" x="669.30" textLength="75.3" lengthAdjust="spacingAndGlyphs">Adjust Numerically</text>
<text y="371.50" font-size="9.1" fill="#9a9a9a" x="812.50" textLength="13" lengthAdjust="spacingAndGlyphs" text-decoration="underline">Min</text>
<text y="371.50" font-size="9.1" fill="#9a9a9a" x="862.00" textLength="15.8" lengthAdjust="spacingAndGlyphs" text-decoration="underline">Max</text>
<text y="392.80" font-size="9.2" fill="#b2b2b2" x="632.80" textLength="73.7" lengthAdjust="spacingAndGlyphs">Horizontal Position:</text>
<text y="414.60" font-size="9.15" fill="#b2b2b2" x="706.50" text-anchor="end" textLength="63.21" lengthAdjust="spacingAndGlyphs">Vertical Position:</text>
<text y="435.80" font-size="9.15" fill="#b2b2b2" x="706.50" text-anchor="end" textLength="41.19" lengthAdjust="spacingAndGlyphs">Key Effect:</text>
<text y="392.80" font-size="9.2" fill="#ababab" x="754.00" text-anchor="end" textLength="14.34" lengthAdjust="spacingAndGlyphs">N/A</text>
<text y="414.60" font-size="9.2" fill="#ababab" x="754.00" text-anchor="end" textLength="14.34" lengthAdjust="spacingAndGlyphs">N/A</text>
<text y="392.80" font-size="9.2" fill="#777" x="819.00" text-anchor="middle" textLength="22.0" lengthAdjust="spacingAndGlyphs">-4096</text>
<text y="392.80" font-size="9.2" fill="#777" x="869.30" text-anchor="middle" textLength="19.13" lengthAdjust="spacingAndGlyphs">4096</text>
<text y="414.60" font-size="9.2" fill="#777" x="819.00" text-anchor="middle" textLength="22.0" lengthAdjust="spacingAndGlyphs">-2400</text>
<text y="414.60" font-size="9.2" fill="#777" x="869.30" text-anchor="middle" textLength="19.13" lengthAdjust="spacingAndGlyphs">2400</text>
<text y="435.80" font-size="9.1" fill="#b4b4b4" x="718.70" textLength="31.5" lengthAdjust="spacingAndGlyphs">Disabled</text>
</svg>
<div id="rstrip"></div><div id="lstrip"></div>
<div id="ftop"></div><div id="acttop"></div><div id="fleft"></div><div id="fbot"></div><div id="fright"></div>
</body></html>
